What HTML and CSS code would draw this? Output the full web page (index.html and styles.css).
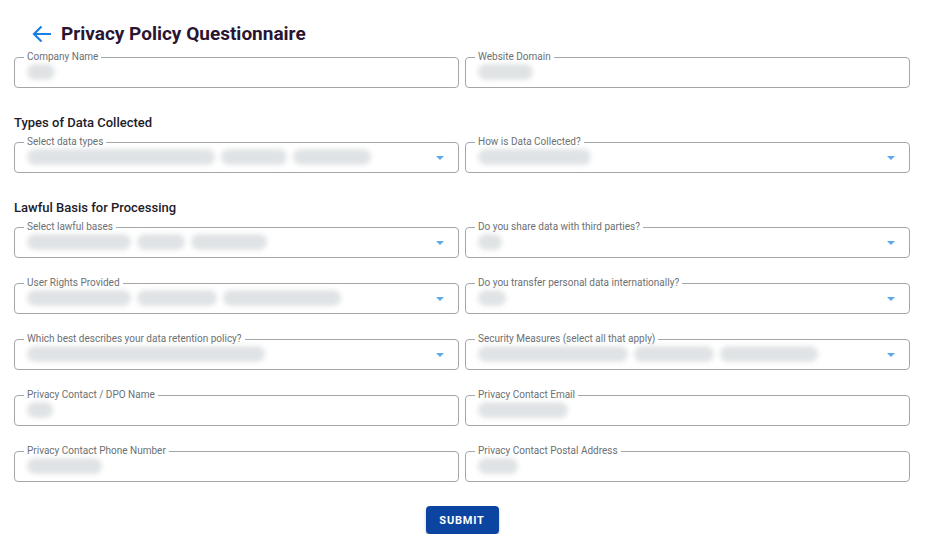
FILE: index.html
```html
<!DOCTYPE html>
<html lang="en">
<head>
<meta charset="utf-8">
<title>Privacy Policy Questionnaire</title>
<link rel="stylesheet" href="styles.css">
</head>
<body>
<div class="page">
  <header class="header">
    <svg class="back" width="20" height="18" viewBox="0 0 20 18" aria-hidden="true">
      <path d="M19 9H2.5M9.5 1.5L2 9l7.5 7.5" fill="none" stroke="#1a7fe6" stroke-width="2.2" stroke-linecap="butt" stroke-linejoin="miter"/>
    </svg>
    <h1 class="title">Privacy Policy Questionnaire</h1>
  </header>

  <form class="form">
    <div class="grid">
      <fieldset class="field"><legend>Company Name</legend>
        <div class="value"><span class="blur" style="width:28px"></span></div></fieldset>
      <fieldset class="field"><legend>Website Domain</legend>
        <div class="value"><span class="blur" style="width:55px"></span></div></fieldset>
    </div>

    <h2 class="section">Types of Data Collected</h2>
    <div class="grid">
      <fieldset class="field select"><legend>Select data types</legend>
        <div class="value"><span class="blur" style="width:188px"></span><span class="blur" style="width:66px"></span><span class="blur" style="width:78px"></span></div><span class="caret"></span></fieldset>
      <fieldset class="field select"><legend>How is Data Collected?</legend>
        <div class="value"><span class="blur" style="width:113px"></span></div><span class="caret"></span></fieldset>
    </div>

    <h2 class="section">Lawful Basis for Processing</h2>
    <div class="grid rows">
      <fieldset class="field select"><legend>Select lawful bases</legend>
        <div class="value"><span class="blur" style="width:104px"></span><span class="blur" style="width:48px"></span><span class="blur" style="width:76px"></span></div><span class="caret"></span></fieldset>
      <fieldset class="field select"><legend>Do you share data with third parties?</legend>
        <div class="value"><span class="blur" style="width:24px"></span></div><span class="caret"></span></fieldset>

      <fieldset class="field select"><legend>User Rights Provided</legend>
        <div class="value"><span class="blur" style="width:104px"></span><span class="blur" style="width:80px"></span><span class="blur" style="width:118px"></span></div><span class="caret"></span></fieldset>
      <fieldset class="field select"><legend>Do you transfer personal data internationally?</legend>
        <div class="value"><span class="blur" style="width:28px"></span></div><span class="caret"></span></fieldset>

      <fieldset class="field select"><legend>Which best describes your data retention policy?</legend>
        <div class="value"><span class="blur" style="width:238px"></span></div><span class="caret"></span></fieldset>
      <fieldset class="field select"><legend>Security Measures (select all that apply)</legend>
        <div class="value"><span class="blur" style="width:150px"></span><span class="blur" style="width:80px"></span><span class="blur" style="width:98px"></span></div><span class="caret"></span></fieldset>

      <fieldset class="field"><legend>Privacy Contact / DPO Name</legend>
        <div class="value"><span class="blur" style="width:26px"></span></div></fieldset>
      <fieldset class="field"><legend>Privacy Contact Email</legend>
        <div class="value"><span class="blur" style="width:90px"></span></div></fieldset>

      <fieldset class="field"><legend>Privacy Contact Phone Number</legend>
        <div class="value"><span class="blur" style="width:75px"></span></div></fieldset>
      <fieldset class="field"><legend>Privacy Contact Postal Address</legend>
        <div class="value"><span class="blur" style="width:40px"></span></div></fieldset>
    </div>

    <div class="actions">
      <button type="button" class="submit">SUBMIT</button>
    </div>
  </form>
</div>
</body>
</html>
```

FILE: styles.css
```css
* { box-sizing: border-box; }

html, body {
  margin: 0;
  padding: 0;
  background: #ffffff;
  font-family: Roboto, "Noto Sans", Arial, sans-serif;
}

.page {
  width: 896px;
  margin-left: 14px;
  padding-top: 22px;
}

.header {
  display: flex;
  align-items: center;
  height: 24px;
  margin-bottom: 5px;
}

.back {
  margin-left: 18px;
  margin-right: 9px;
  flex: none;
}

.title {
  margin: 0;
  font-size: 19px;
  font-weight: 700;
  color: #2a1532;
  line-height: 24px;
}

.grid {
  display: grid;
  grid-template-columns: 445px 445px;
  column-gap: 6px;
  row-gap: 19px;
}

.field {
  position: relative;
  margin: 0;
  min-width: 0;
  height: 37px;
  padding: 0 12px;
  border: 1px solid #a3a7ab;
  border-radius: 4px;
}

.field legend {
  padding: 0 3px;
  margin-left: -3px;
  font-size: 10px;
  line-height: 12px;
  color: #6c6f73;
  white-space: nowrap;
}

.value {
  display: flex;
  height: 16px;
  margin-top: 1px;
}

.blur {
  display: block;
  height: 16px;
  background: #e0e3e5;
  border-radius: 8px;
  filter: blur(2.5px);
}

.blur + .blur {
  margin-left: 6px;
}

.caret {
  position: absolute;
  right: 14px;
  top: 8px;
  width: 0;
  height: 0;
  border-left: 4.5px solid transparent;
  border-right: 4.5px solid transparent;
  border-top: 4.5px solid #5aaaf0;
}

.section {
  margin: 27px 0 5px 0;
  font-size: 13px;
  line-height: 16px;
  font-weight: 500;
  color: #221b29;
}

.actions {
  display: flex;
  justify-content: center;
  margin-top: 24px;
}

.submit {
  width: 73px;
  height: 28px;
  border: none;
  border-radius: 4px;
  background: #0b45a1;
  color: #ffffff;
  font-family: Roboto, Arial, sans-serif;
  font-size: 11px;
  font-weight: 700;
  letter-spacing: 0.8px;
  box-shadow: 0 2px 3px rgba(0, 0, 0, 0.25);
  padding: 0;
}
```
